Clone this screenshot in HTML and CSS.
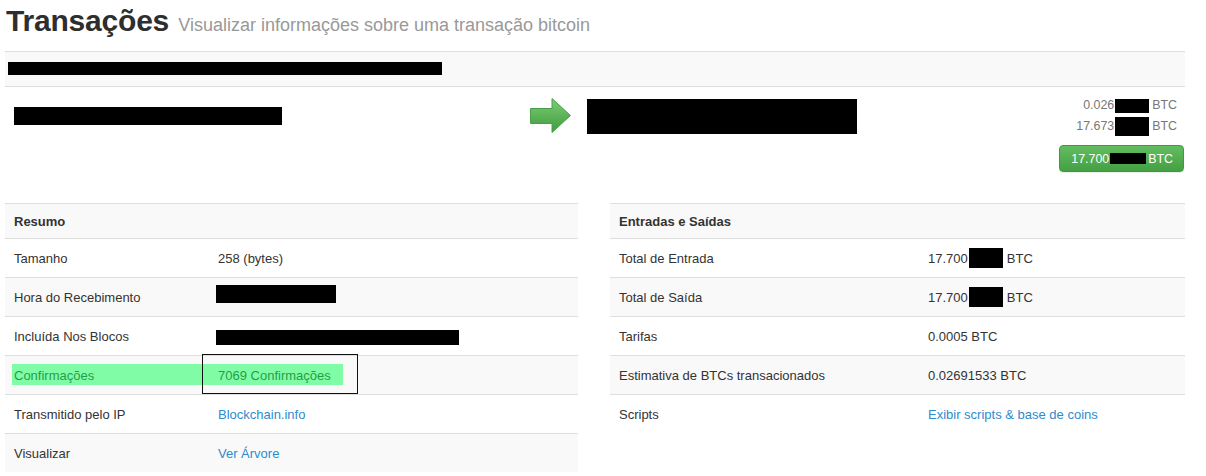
FILE: index.html
```html
<!DOCTYPE html>
<html lang="pt">
<head>
<meta charset="utf-8">
<title>Transações</title>
<link rel="stylesheet" href="styles.css">
</head>
<body>
<div class="page">
  <h1 class="title">Transações <small class="subtitle">Visualizar informações sobre uma transação bitcoin</small></h1>

  <div class="hashbar"><span class="redact r-hash"></span></div>

  <div class="tx">
    <span class="redact r-from"></span>
    <svg class="arrow" width="41" height="35" viewBox="0 0 41 35" aria-hidden="true">
      <defs>
        <linearGradient id="ag" x1="0" y1="0" x2="0" y2="1">
          <stop offset="0" stop-color="#7ccd72"/>
          <stop offset="1" stop-color="#3f9b3f"/>
        </linearGradient>
      </defs>
      <polygon points="0.5,10.5 22,10.5 22,0.5 40.5,17.5 22,34.5 22,25.5 0.5,25.5" fill="url(#ag)" stroke="#4a9e48" stroke-width="1"/>
    </svg>
    <span class="redact r-to"></span>
    <div class="amounts">
      <div class="amt">0.026<span class="redact r-amt"></span>BTC</div>
      <div class="amt">17.673<span class="redact r-amt r-amt2"></span>BTC</div>
      <button class="btn-total" type="button">17.700<span class="redact r-btn"></span>BTC</button>
    </div>
  </div>

  <div class="grid">
    <div class="panel">
      <table class="info info-left">
        <thead>
          <tr><th colspan="2">Resumo</th></tr>
        </thead>
        <tbody>
          <tr><td class="key">Tamanho</td><td>258 (bytes)</td></tr>
          <tr><td class="key">Hora do Recebimento</td><td><span class="redact r-time"></span></td></tr>
          <tr><td class="key">Incluída Nos Blocos</td><td><span class="redact r-block"></span></td></tr>
          <tr><td class="key">Confirmações</td><td>7069 Confirmações</td></tr>
          <tr><td class="key">Transmitido pelo IP</td><td><a href="#">Blockchain.info</a></td></tr>
          <tr><td class="key">Visualizar</td><td><a href="#">Ver Árvore</a></td></tr>
        </tbody>
      </table>
      <span class="highlight"></span>
      <span class="markbox"></span>
    </div>
    <div class="panel">
      <table class="info info-right">
        <thead>
          <tr><th colspan="2">Entradas e Saídas</th></tr>
        </thead>
        <tbody>
          <tr><td class="key">Total de Entrada</td><td>17.700<span class="redact r-val"></span>BTC</td></tr>
          <tr><td class="key">Total de Saída</td><td>17.700<span class="redact r-val"></span>BTC</td></tr>
          <tr><td class="key">Tarifas</td><td>0.0005 BTC</td></tr>
          <tr><td class="key">Estimativa de BTCs transacionados</td><td>0.02691533 BTC</td></tr>
          <tr><td class="key">Scripts</td><td><a href="#">Exibir scripts &amp; base de coins</a></td></tr>
        </tbody>
      </table>
    </div>
  </div>
</div>
</body>
</html>
```

FILE: styles.css
```css
html, body {
  margin: 0;
  padding: 0;
  background: #fff;
}

body {
  font-family: "Liberation Sans", Arial, sans-serif;
  font-size: 13px;
  color: #333;
}

.page {
  width: 1180px;
  margin-left: 5px;
}

.title {
  margin: 0 0 12px 0;
  padding: 3px 0 0 1px;
  height: 36px;
  font-size: 30px;
  line-height: 36px;
  font-weight: bold;
  letter-spacing: -0.2px;
  color: #2e2e2e;
}

.subtitle {
  font-size: 18px;
  line-height: 1;
  font-weight: normal;
  letter-spacing: 0;
  color: #999;
  margin-left: 1px;
}

.redact {
  display: inline-block;
  background: #000;
}

.hashbar {
  border-top: 1px solid #dedede;
  border-bottom: 1px solid #dedede;
  background: #f9f9f9;
  padding: 10px 3px 11px 3px;
  height: 13px;
}

.r-hash {
  width: 434px;
  height: 13px;
  vertical-align: top;
}

.tx {
  display: flex;
  align-items: flex-start;
  padding-top: 8px;
  margin-bottom: 31px;
}

.r-from {
  width: 268px;
  height: 18px;
  margin: 12px 0 0 9px;
}

.arrow {
  display: block;
  margin: 3px 0 0 248px;
}

.r-to {
  width: 270px;
  height: 35px;
  margin: 4px 0 0 16px;
}

.amounts {
  margin-left: auto;
  display: flex;
  flex-direction: column;
  align-items: flex-end;
}

.amt {
  font-size: 12.4px;
  line-height: 21px;
  color: #777;
  padding-right: 8px;
  display: flex;
  align-items: center;
}

.r-amt {
  width: 34px;
  height: 14px;
  margin: 0 3px 0 1px;
}

.r-amt2 {
  height: 19px;
}

.btn-total {
  margin-top: 8px;
  margin-right: 1px;
  height: 27px;
  padding: 0 10px 0 11px;
  border: 1px solid #3e9a3e;
  border-radius: 4px;
  background: linear-gradient(#62bd5f, #43a043);
  color: #fff;
  font-family: "Liberation Sans", Arial, sans-serif;
  font-size: 12.4px;
  display: flex;
  align-items: center;
  box-shadow: 0 1px 1px rgba(0, 0, 0, 0.08);
}

.r-btn {
  width: 36px;
  height: 11px;
  margin: 0 2px 0 1px;
}

.grid {
  display: grid;
  grid-template-columns: 573px 575px;
  column-gap: 32px;
}

.panel {
  position: relative;
}

.info {
  width: 100%;
  border-collapse: collapse;
}

.info th,
.info td {
  border-top: 1px solid #dedede;
  text-align: left;
  vertical-align: top;
  line-height: 20px;
  padding: 10px 8px 8px 8px;
  white-space: nowrap;
}

.info th {
  padding: 8px 9px 6px 9px;
  font-weight: bold;
}

.info .key {
  padding-left: 9px;
}

.info thead tr,
.info tbody tr:nth-child(even) {
  background: #f9f9f9;
}

.info-left .key {
  width: 188px;
}

.info-right .key {
  width: 293px;
}

.info a {
  color: #2d8bcd;
  text-decoration: none;
}

.r-time {
  width: 120px;
  height: 18px;
  vertical-align: top;
  margin: -3px 0 0 -2px;
}

.r-block {
  width: 243px;
  height: 15px;
  vertical-align: middle;
  margin: -1px 0 0 -2px;
}

.r-val {
  width: 34px;
  height: 20px;
  vertical-align: top;
  margin: -1px 4px 0 1px;
}

.highlight {
  position: absolute;
  left: 7px;
  top: 161px;
  width: 331px;
  height: 21px;
  background: rgba(20, 255, 90, 0.52);
  pointer-events: none;
}

.markbox {
  position: absolute;
  left: 197px;
  top: 151px;
  width: 156px;
  height: 40px;
  box-sizing: border-box;
  border: 1px solid #111;
  pointer-events: none;
}
```
